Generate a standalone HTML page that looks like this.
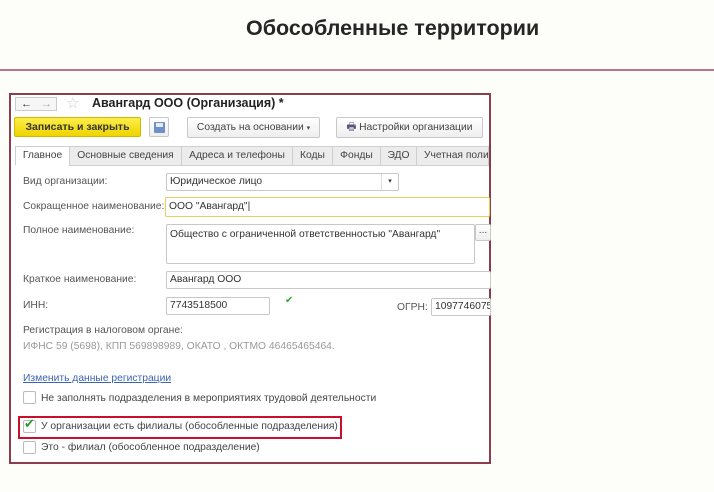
<!DOCTYPE html>
<html><head><meta charset="utf-8"><style>
*{margin:0;padding:0;box-sizing:border-box}
body{width:714px;height:492px;background:#fdfdf9;font-family:"Liberation Sans",sans-serif;position:relative;overflow:hidden;color:#333}
.a{position:absolute}
.t{font-size:10.3px;white-space:nowrap}
.fld{position:absolute;background:#fff;border:1px solid #c8c8c8;border-radius:2px;font-size:10.3px;padding:2px 3px;color:#333;white-space:nowrap;overflow:hidden}
.btn{position:absolute;background:linear-gradient(#fff,#eee);border:1px solid #c8c8c8;border-radius:2px;font-size:10.3px;color:#444;text-align:center;line-height:19px;white-space:nowrap}
.tab{position:absolute;top:146px;height:20px;background:#ececec;border:1px solid #cfcfcf;font-size:10.3px;color:#444;text-align:center;line-height:18px;white-space:nowrap}
.cb{position:absolute;width:13px;height:13px;border:1px solid #bbb;background:#fff;border-radius:2px}
</style></head><body>
<div class="a" style="left:246px;top:16px;width:300px;font-size:21.5px;font-weight:bold;color:#262626;white-space:nowrap">Обособленные территории</div>
<div class="a" style="left:0;top:69px;width:714px;height:2px;background:#b87484"></div>
<div class="a" style="left:9px;top:93px;width:482px;height:371px;border:2px solid #8a3e4c;background:#fff"></div>
<div class="a" style="left:15px;top:97px;width:42px;height:14px;border:1px solid #ccc;background:#f6f6f6;font-size:11px;line-height:12px"><span style="position:absolute;left:5px;font-weight:bold">←</span><span style="position:absolute;left:25px;color:#aaa">→</span></div>
<div class="a" style="left:66px;top:94px;font-size:15px;color:#ccc">☆</div>
<div class="a" style="left:92px;top:96px;font-size:12.5px;font-weight:bold;color:#222">Авангард ООО (Организация) *</div>
<div class="a" style="left:14px;top:117px;width:127px;height:20px;background:linear-gradient(#fbee4a,#efd400);border:1px solid #d2b800;border-radius:2px;font-size:10.5px;font-weight:bold;text-align:center;line-height:18px;color:#333">Записать и закрыть</div>
<div class="btn" style="left:149px;top:117px;width:20px;height:20px"><div style="position:absolute;left:4px;top:4px;width:11px;height:11px;background:#6f8fc8;border-radius:1px"><div style="position:absolute;left:2px;top:1px;width:7px;height:4px;background:#e6ecf6"></div></div></div>
<div class="btn" style="left:187px;top:117px;width:133px;height:21px">Создать на основании <span style="font-size:7px">▾</span></div>
<div class="btn" style="left:336px;top:117px;width:147px;height:21px"><span style="color:#557">🖶</span> Настройки организации</div>
<div class="tab" style="left:15px;width:55px;background:#fff;border-bottom-color:#fff">Главное</div>
<div class="tab" style="left:69px;width:113px">Основные сведения</div>
<div class="tab" style="left:181px;width:112px">Адреса и телефоны</div>
<div class="tab" style="left:292px;width:41px">Коды</div>
<div class="tab" style="left:332px;width:49px">Фонды</div>
<div class="tab" style="left:380px;width:37px">ЭДО</div>
<div class="tab" style="left:416px;width:73px;text-align:left;padding-left:7px;overflow:hidden">Учетная поли</div>
<div class="a t" style="left:23px;top:176px;color:#555">Вид организации:</div>
<div class="fld" style="left:166px;top:173px;width:233px;height:18px">Юридическое лицо</div>
<div class="a" style="left:381px;top:174px;width:17px;height:16px;border-left:1px solid #ddd;font-size:7px;text-align:center;line-height:16px">▾</div>
<div class="a t" style="left:23px;top:201px;color:#555">Сокращенное наименование:</div>
<div class="fld" style="left:165px;top:197px;width:325px;height:20px;border-color:#e4d35a;padding-top:3px">ООО "Авангард"|</div>
<div class="a t" style="left:23px;top:225px;color:#555">Полное наименование:</div>
<div class="fld" style="left:166px;top:224px;width:309px;height:40px;padding-top:4px">Общество с ограниченной ответственностью "Авангард"</div>
<div class="btn" style="left:475px;top:224px;width:16px;height:17px;line-height:12px">...</div>
<div class="a t" style="left:23px;top:274px;color:#555">Краткое наименование:</div>
<div class="fld" style="left:166px;top:271px;width:325px;height:18px">Авангард ООО</div>
<div class="a t" style="left:23px;top:300px;color:#555">ИНН:</div>
<div class="fld" style="left:166px;top:297px;width:104px;height:18px">7743518500</div>
<div class="a" style="left:285px;top:295px;font-size:10px;color:#3a3">✔</div>
<div class="a t" style="left:397px;top:302px;color:#555">ОГРН:</div>
<div class="fld" style="left:431px;top:298px;width:60px;height:18px">1097746075</div>
<div class="a t" style="left:23px;top:325px;color:#555">Регистрация в налоговом органе:</div>
<div class="a t" style="left:23px;top:341px;color:#999">ИФНС 59 (5698), КПП 569898989, ОКАТО , ОКТМО 46465465464.</div>
<div class="a t" style="left:23px;top:373px;color:#3a64b4;text-decoration:underline">Изменить данные регистрации</div>
<div class="cb" style="left:23px;top:391px"></div>
<div class="a t" style="left:41px;top:393px;color:#444">Не заполнять подразделения в мероприятиях трудовой деятельности</div>
<div class="a" style="left:18px;top:416px;width:324px;height:23px;border:2px solid #c8102e"></div>
<div class="cb" style="left:23px;top:420px"></div>
<div class="a" style="left:24px;top:416px;font-size:13px;color:#2a9a2a">✔</div>
<div class="a t" style="left:41px;top:421px;color:#444">У организации есть филиалы (обособленные подразделения)</div>
<div class="cb" style="left:23px;top:441px"></div>
<div class="a t" style="left:41px;top:442px;color:#444">Это - филиал (обособленное подразделение)</div>
</body></html>
